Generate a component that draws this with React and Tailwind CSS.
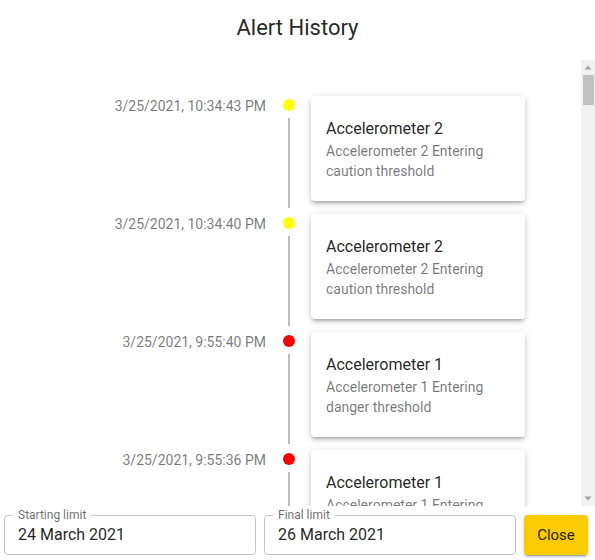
import { useState } from "react";

const seed = [
  ["3/25/2021, 10:34:43 PM", "Accelerometer 2", "caution"],
  ["3/25/2021, 10:34:40 PM", "Accelerometer 2", "caution"],
  ["3/25/2021, 9:55:40 PM", "Accelerometer 1", "danger"],
  ["3/25/2021, 9:55:36 PM", "Accelerometer 1", "danger"]
];

function buildAlerts() {
  const list = seed.map(([time, sensor, level]) => ({ time, sensor, level }));
  let h = 21;
  let m = 40;
  let s = 12;
  for (let i = 0; list.length < 52; i++) {
    const sensor = i % 3 === 0 ? "Accelerometer 2" : "Accelerometer 1";
    const level = i % 2 === 0 ? "caution" : "danger";
    const hour = h > 12 ? h - 12 : h;
    const ampm = h >= 12 ? "PM" : "AM";
    list.push({
      time: `3/25/2021, ${hour}:${String(m).padStart(2, "0")}:${String(s).padStart(2, "0")} ${ampm}`,
      sensor,
      level
    });
    s -= 17;
    if (s < 0) {
      s += 60;
      m -= 1;
    }
    if (i % 4 === 3) m -= 6;
    if (m < 0) {
      m += 60;
      h -= 1;
    }
  }
  return list;
}

function AlertItem({ alert }) {
  const dot = alert.level === "danger" ? "bg-[#ff0000]" : "bg-[#ffff00]";
  return (
    <li className="flex h-[118px]">
      <div className="w-[266px] shrink-0 text-right text-sm leading-5 text-[rgba(0,0,0,0.54)]">{alert.time}</div>
      <div className="ml-[17px] flex w-3 shrink-0 flex-col items-center">
        <span className={`mt-[3px] h-3 w-3 rounded-full ${dot}`} />
        <span className="mt-[7px] mb-[6px] w-[2px] flex-1 bg-[#bdbdbd]" />
      </div>
      <div className="ml-4 h-[105px] w-[214px] shrink-0 rounded bg-white px-[15px] pt-[21px] shadow-[0px_3px_3px_-2px_rgba(0,0,0,0.2),0px_3px_4px_0px_rgba(0,0,0,0.14),0px_1px_8px_0px_rgba(0,0,0,0.12)]">
        <div className="text-base leading-6 text-[rgba(0,0,0,0.87)]">{alert.sensor}</div>
        <div className="text-sm leading-5 text-[rgba(0,0,0,0.54)]">
          {alert.sensor} Entering {alert.level} threshold
        </div>
      </div>
    </li>
  );
}

function ScrollArrow({ down }) {
  return (
    <div className="flex h-[15px] shrink-0 items-center justify-center">
      <svg width="8" height="5" viewBox="0 0 8 5" className={down ? "rotate-180" : ""}>
        <path d="M4 0.5 L7.5 4.5 L0.5 4.5 Z" fill="#a3a3a3" />
      </svg>
    </div>
  );
}

function Scrollbar() {
  return (
    <div className="flex w-[14px] shrink-0 flex-col bg-[#f1f1f1]">
      <ScrollArrow />
      <div className="mr-px ml-[2px] h-[30px] bg-[#c1c1c1]" />
      <div className="flex-1" />
      <ScrollArrow down />
    </div>
  );
}

function DateField({ label, value }) {
  return (
    <div className="relative flex h-10 flex-1 items-center rounded border border-[rgba(0,0,0,0.23)] pl-[13px] text-base text-[rgba(0,0,0,0.87)]">
      <span className="absolute -top-2 left-2 bg-white px-[5px] text-xs leading-[14px] text-[rgba(0,0,0,0.6)]">{label}</span>
      {value}
    </div>
  );
}

export default function App() {
  const [alerts] = useState(buildAlerts);

  return (
    <div className="flex h-[560px] w-[595px] flex-col bg-white font-['Roboto',sans-serif]">
      <h2 className="h-[60px] shrink-0 pt-3 text-center text-[22px] leading-8 text-[rgba(0,0,0,0.87)]">Alert History</h2>
      <div className="flex h-[446px] shrink-0">
        <div className="flex-1 overflow-hidden">
          <ul className="pt-9">
            {alerts.map((alert, i) => (
              <AlertItem key={i} alert={alert} />
            ))}
          </ul>
        </div>
        <Scrollbar />
      </div>
      <div className="flex gap-2 pt-[9px] pr-[7px] pl-1">
        <DateField label="Starting limit" value="24 March 2021" />
        <DateField label="Final limit" value="26 March 2021" />
        <button
          type="button"
          className="h-10 w-16 shrink-0 rounded bg-[#facc00] text-[15px] text-[rgba(0,0,0,0.87)] shadow-[0px_3px_1px_-2px_rgba(0,0,0,0.2),0px_2px_2px_0px_rgba(0,0,0,0.14),0px_1px_5px_0px_rgba(0,0,0,0.12)]"
        >
          Close
        </button>
      </div>
    </div>
  );
}
